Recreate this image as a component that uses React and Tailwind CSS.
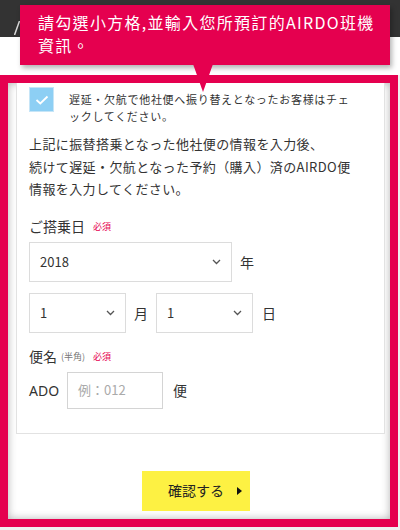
import React from 'react'

const jp = { fontFamily: '"Noto Sans CJK JP", "Noto Sans", sans-serif' }
const tc = { fontFamily: '"Noto Sans CJK TC", "Noto Sans", sans-serif' }

function Chevron() {
    return (
        <svg width="9" height="6" viewBox="0 0 9 6" fill="none">
            <path d="M1 1l3.5 3.5L8 1" stroke="#555" strokeWidth="1.3" />
        </svg>
    )
}

function Select({ value, width }) {
    return (
        <div className={`flex items-center justify-between h-[40px] border border-[#dcdcdc] bg-white pl-[10px] pr-[10px] ${width}`}>
            <span className="text-[13px] text-[#333]">{value}</span>
            <Chevron />
        </div>
    )
}

export default function App() {
    return (
        <div className="relative w-[400px] h-[530px] overflow-hidden bg-[#f0f0f0]" style={jp}>
            {/* page header behind the overlay, its logo is mostly hidden */}
            <div className="h-[37px] bg-[#333333] flex items-end pl-[14px]">
                <svg width="6" height="14" viewBox="0 0 6 14" className="mb-[2px]">
                    <path d="M0.5 14L5.5 0" stroke="#ddd" strokeWidth="1.5" />
                </svg>
            </div>
            <div className="h-[38px] bg-white"></div>

            {/* highlighted frame */}
            <div className="w-[398px] h-[452px] border-[8px] border-[#e5004f] bg-white shadow-[inset_0_0_9px_rgba(0,0,0,0.3)] flex flex-col">
                <div className="ml-2 mr-[5px] border-x border-b border-[#e2e2e2] bg-white pl-3 pr-3 pt-1 pb-[24px]">
                    <div className="flex items-start">
                        <div className="w-[25px] h-[25px] shrink-0 bg-[#8dcff4] border border-[#c6e5f7] flex items-center justify-center">
                            <svg width="14" height="10" viewBox="0 0 14 10" fill="none">
                                <path d="M1.5 5l3.8 3.5L12.5 1.5" stroke="white" strokeWidth="1.8" />
                            </svg>
                        </div>
                        <p className="ml-[15px] mt-[4px] text-[11px] leading-[17px] tracking-[0.7px] text-[#333] whitespace-nowrap">
                            遅延・欠航で他社便へ振り替えとなったお客様はチェ<br />ックしてください。
                        </p>
                    </div>

                    <p className="mt-[8px] text-[13px] leading-[22.5px] tracking-[0.4px] text-[#333] whitespace-nowrap">
                        上記に振替搭乗となった他社便の情報を入力後、<br />
                        続けて遅延・欠航となった予約（購入）済のAIRDO便<br />
                        情報を入力してください。
                    </p>

                    <div className="mt-[16px] flex items-center h-[20px]">
                        <span className="text-[14px] text-[#333]">ご搭乗日</span>
                        <span className="ml-[8px] text-[9px] text-[#e5004f]">必須</span>
                    </div>

                    <div className="mt-[5px] flex items-center">
                        <Select value="2018" width="w-[203px]" />
                        <span className="ml-[8px] mt-[2px] text-[14px] text-[#333]">年</span>
                    </div>

                    <div className="mt-[11px] flex items-center">
                        <Select value="1" width="w-[97px]" />
                        <span className="ml-[8px] mt-[2px] text-[14px] text-[#333]">月</span>
                        <div className="ml-[8px]">
                            <Select value="1" width="w-[97px]" />
                        </div>
                        <span className="ml-[9px] mt-[2px] text-[14px] text-[#333]">日</span>
                    </div>

                    <div className="mt-[14px] flex items-center h-[20px]">
                        <span className="text-[14px] text-[#333]">便名</span>
                        <span className="ml-[4px] text-[9px] text-[#777]">(半角)</span>
                        <span className="ml-[8px] text-[9px] text-[#e5004f]">必須</span>
                    </div>

                    <div className="mt-[5px] flex items-center">
                        <span className="text-[14px] text-[#333]" style={{ fontFamily: '"Noto Sans", sans-serif' }}>ADO</span>
                        <div className="ml-[8px] w-[96px] h-[37px] border border-[#d4d4d4] bg-white flex items-center pl-[10px]">
                            <span className="text-[13px] text-[#aaa]">例：012</span>
                        </div>
                        <span className="ml-[10px] text-[14px] text-[#333]">便</span>
                    </div>
                </div>

                <div className="mt-[37px] flex justify-center pr-[6px]">
                    <div className="w-[108px] h-[40px] bg-[#fdf143] flex items-center justify-center relative">
                        <span className="text-[14px] text-[#222]">確認する</span>
                        <svg className="absolute right-[8px] top-[16px]" width="5" height="8" viewBox="0 0 5 8">
                            <path d="M0 0l5 4-5 4z" fill="#111" />
                        </svg>
                    </div>
                </div>
            </div>

            {/* instruction tooltip */}
            <div className="absolute left-[20px] top-[5px] w-[370px] h-[60px] bg-[#e5004f] shadow-[2px_3px_5px_rgba(0,0,0,0.3)] pl-[18px] pt-[6px]" style={tc}>
                <p className="text-white text-[16px] leading-[23px] tracking-[1.3px]">
                    請勾選小方格,並輸入您所預訂的AIRDO班機<br />資訊。
                </p>
                <div className="absolute left-[173px] top-[59px] w-0 h-0 border-l-[10px] border-r-[10px] border-t-[28px] border-l-transparent border-r-transparent border-t-[#e5004f]"></div>
            </div>
        </div>
    )
}
